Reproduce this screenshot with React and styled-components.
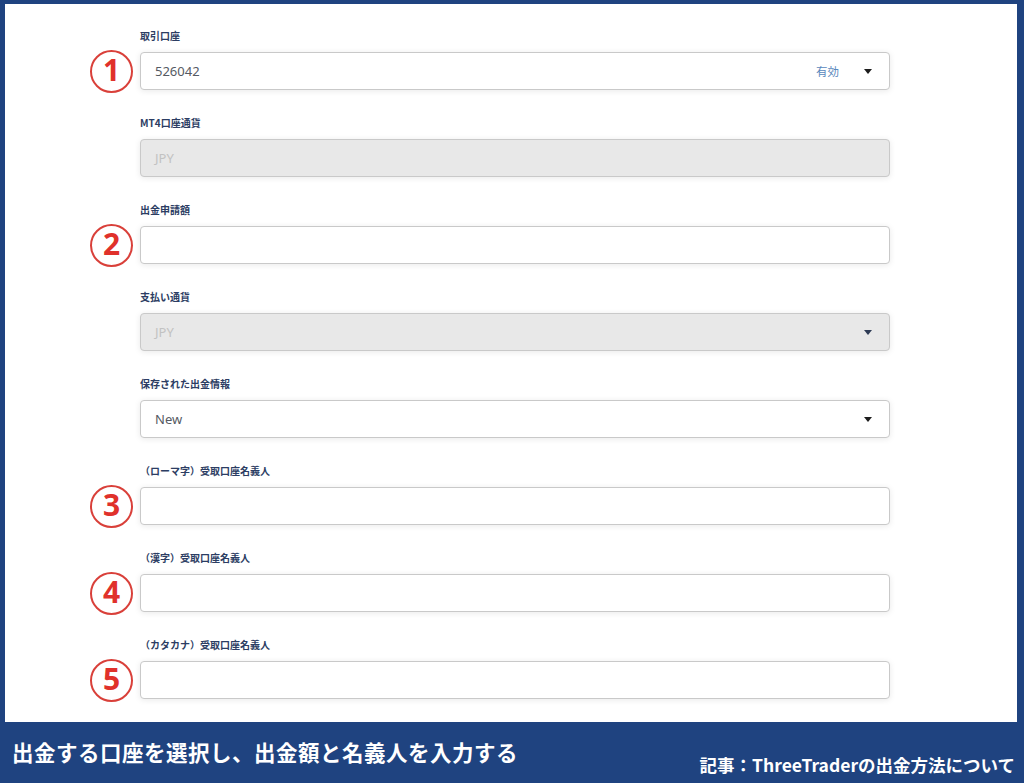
import React from "react";
import styled, { createGlobalStyle } from "styled-components";

const GlobalStyle = createGlobalStyle`
  html, body {
    margin: 0;
    padding: 0;
    background: #1f4380;
  }
  * {
    box-sizing: border-box;
  }
`;

const fields = [
  { label: "取引口座", value: "526042", badge: "有効", select: true, mark: "1" },
  { label: "MT4口座通貨", value: "JPY", disabled: true },
  { label: "出金申請額", value: "", mark: "2" },
  { label: "支払い通貨", value: "JPY", disabled: true, select: true },
  { label: "保存された出金情報", value: "New", select: true },
  { label: "（ローマ字）受取口座名義人", value: "", mark: "3" },
  { label: "（漢字）受取口座名義人", value: "", mark: "4" },
  { label: "（カタカナ）受取口座名義人", value: "", mark: "5" },
];

export default function App() {
  return (
    <Frame>
      <GlobalStyle />
      <Panel>
        {fields.map((f) => (
          <FieldRow key={f.label}>
            <Label>{f.label}</Label>
            <MarkCell>{f.mark && <Mark>{f.mark}</Mark>}</MarkCell>
            <Box disabled={f.disabled}>
              <Value disabled={f.disabled}>{f.value}</Value>
              {f.badge && <Badge>{f.badge}</Badge>}
              {f.select && <Caret disabled={f.disabled} />}
            </Box>
          </FieldRow>
        ))}
      </Panel>
      <Footer>
        <Caption>出金する口座を選択し、出金額と名義人を入力する</Caption>
        <Credit>記事：ThreeTraderの出金方法について</Credit>
      </Footer>
    </Frame>
  );
}

const Frame = styled.div`
  width: 1024px;
  height: 783px;
  background: #1f4380;
  display: flex;
  flex-direction: column;
  padding: 4px 7px 0 5px;
  font-family: "Noto Sans", "Noto Sans CJK JP", sans-serif;
`;

const Panel = styled.div`
  height: 718px;
  background: #ffffff;
  padding: 25px 0 0 83px;
  display: flex;
  flex-direction: column;
  gap: 26px;
`;

const FieldRow = styled.div`
  display: grid;
  grid-template-columns: 52px 750px;
  grid-template-rows: 14px 38px;
  row-gap: 9px;
`;

const Label = styled.div`
  grid-column: 2;
  grid-row: 1;
  font-size: 10px;
  line-height: 14px;
  font-weight: 700;
  color: #2c3d63;
  font-family: "Noto Sans CJK JP", "Noto Sans", sans-serif;
`;

const MarkCell = styled.div`
  grid-column: 1;
  grid-row: 2;
  display: flex;
  align-items: center;
  justify-content: flex-end;
  padding-right: 7px;
`;

const Mark = styled.div`
  width: 43px;
  height: 43px;
  flex-shrink: 0;
  border: 2.5px solid #d9403a;
  border-radius: 50%;
  display: flex;
  align-items: center;
  justify-content: center;
  color: #e0312b;
  font-size: 30px;
  font-weight: 700;
  font-family: "Noto Sans", sans-serif;
  line-height: 1;
  padding-bottom: 2px;
`;

const Box = styled.div`
  grid-column: 2;
  grid-row: 2;
  display: flex;
  align-items: center;
  padding: 0 17px 0 14px;
  background: ${(p) => (p.disabled ? "#e8e8e8" : "#ffffff")};
  border: 1px solid #c9c9c9;
  border-radius: 4px;
  box-shadow: 0 1px 6px rgba(0, 0, 0, 0.09);
`;

const Value = styled.span`
  flex: 1;
  font-size: 13px;
  color: ${(p) => (p.disabled ? "#c2c2c2" : "#555a63")};
`;

const Badge = styled.span`
  font-size: 11.5px;
  color: #5a88bd;
  margin-right: 25px;
  font-family: "Noto Sans CJK JP", sans-serif;
`;

const Caret = styled.span`
  width: 0;
  height: 0;
  border-left: 4.5px solid transparent;
  border-right: 4.5px solid transparent;
  border-top: 5px solid ${(p) => (p.disabled ? "#2e3b55" : "#1d1d1d")};
`;

const Footer = styled.div`
  flex: 1;
  display: flex;
  justify-content: space-between;
  padding: 0 2px 0 7px;
  color: #ffffff;
  font-family: "Noto Sans CJK JP", sans-serif;
  font-weight: 700;
`;

const Caption = styled.div`
  font-size: 21.5px;
  line-height: 1;
  padding-top: 19px;
  letter-spacing: 0.5px;
`;

const Credit = styled.div`
  font-size: 17.5px;
  line-height: 1;
  padding-top: 34px;
`;
